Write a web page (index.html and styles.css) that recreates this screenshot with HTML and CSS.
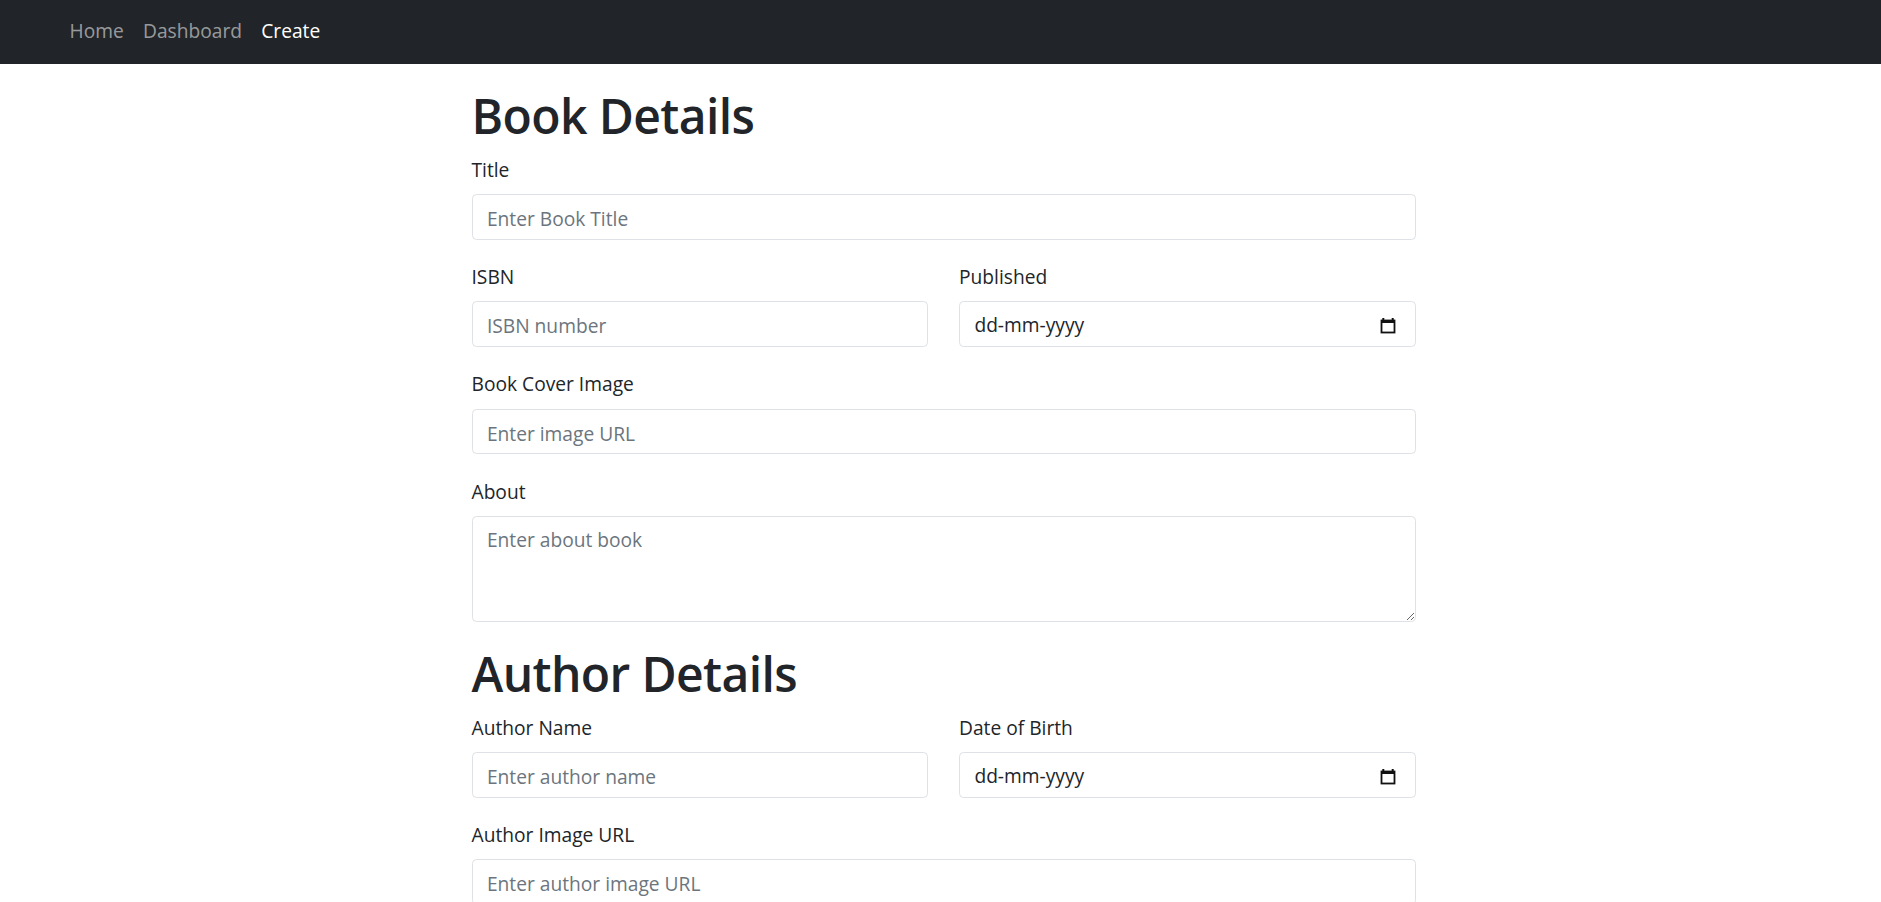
FILE: index.html
```html
<!DOCTYPE html>
<html lang="en">
<head>
<meta charset="utf-8">
<title>Create Book</title>
<link rel="stylesheet" href="styles.css">
</head>
<body>
<nav class="navbar">
  <a class="nav-link" href="#">Home</a>
  <a class="nav-link" href="#">Dashboard</a>
  <a class="nav-link active" href="#">Create</a>
</nav>
<div class="page">
  <form class="form">
    <section class="section">
      <h1 class="heading">Book Details</h1>
      <div class="field">
        <label class="label" for="title">Title</label>
        <input class="control" id="title" type="text" placeholder="Enter Book Title">
      </div>
      <div class="row">
        <div class="col">
          <label class="label" for="isbn">ISBN</label>
          <input class="control" id="isbn" type="text" placeholder="ISBN number">
        </div>
        <div class="col">
          <label class="label">Published</label>
          <div class="control date">
            <span class="date-text">dd-mm-yyyy</span>
            <svg class="cal" width="16" height="17" viewBox="0 0 16 17"><rect x="1.5" y="3.5" width="13" height="12" fill="none" stroke="#111" stroke-width="1.8"/><rect x="1.5" y="3" width="13" height="3" fill="#111"/><rect x="2.3" y="1" width="2" height="3" fill="#111"/><rect x="11.7" y="1" width="2" height="3" fill="#111"/></svg>
          </div>
        </div>
      </div>
      <div class="field">
        <label class="label" for="cover">Book Cover Image</label>
        <input class="control" id="cover" type="text" placeholder="Enter image URL">
      </div>
      <div class="field">
        <label class="label" for="about">About</label>
        <textarea class="control area" id="about" placeholder="Enter about book"></textarea>
      </div>
    </section>
    <section class="section second">
      <h1 class="heading">Author Details</h1>
      <div class="row">
        <div class="col">
          <label class="label" for="aname">Author Name</label>
          <input class="control" id="aname" type="text" placeholder="Enter author name">
        </div>
        <div class="col">
          <label class="label">Date of Birth</label>
          <div class="control date">
            <span class="date-text">dd-mm-yyyy</span>
            <svg class="cal" width="16" height="17" viewBox="0 0 16 17"><rect x="1.5" y="3.5" width="13" height="12" fill="none" stroke="#111" stroke-width="1.8"/><rect x="1.5" y="3" width="13" height="3" fill="#111"/><rect x="2.3" y="1" width="2" height="3" fill="#111"/><rect x="11.7" y="1" width="2" height="3" fill="#111"/></svg>
          </div>
        </div>
      </div>
      <div class="field">
        <label class="label" for="aimg">Author Image URL</label>
        <input class="control" id="aimg" type="text" placeholder="Enter author image URL">
      </div>
    </section>
  </form>
</div>
</body>
</html>
```
FILE: styles.css
```css
* { box-sizing: border-box; }
html, body { margin: 0; padding: 0; }
body {
  font-family: "Open Sans", "Noto Sans", sans-serif;
  font-size: 19.2px;
  line-height: 1.5;
  color: #212529;
  background: #fff;
  overflow: hidden;
}
.navbar {
  height: 64px;
  background: #212529;
  display: flex;
  align-items: center;
  padding-left: 60px;
  padding-bottom: 2px;
}
.nav-link {
  color: rgba(255,255,255,0.55);
  text-decoration: none;
  padding: 0 9.6px;
  line-height: 28.8px;
}
.nav-link.active { color: #fff; }
.page { padding-left: 6px; }
.form {
  width: 944px;
  margin: 0 auto;
  padding-top: 23px;
}
.heading {
  font-size: 48px;
  font-weight: 600;
  line-height: 57.6px;
  margin: 0 0 11px;
  letter-spacing: -0.6px;
}
.section.second { margin-top: 22.5px; }
.section.second .heading { margin-bottom: 11.5px; }
.field, .row { margin-top: 23.4px; }
.heading + .field, .heading + .row { margin-top: 0; }
.row { display: flex; gap: 31px; }
.col { flex: 1 1 0; min-width: 0; }
.label {
  display: block;
  line-height: 28.8px;
  margin-bottom: 9.6px;
}
.control {
  display: block;
  width: 100%;
  height: 45.6px;
  padding: 9px 14.4px 6px;
  font-family: inherit;
  font-size: 19.2px;
  line-height: 28.6px;
  color: #212529;
  background: #fff;
  border: 1px solid #dee2e6;
  border-radius: 4.5px;
  outline: none;
}
.control::placeholder { color: #6c757d; opacity: 1; }
.area { height: 106px; resize: vertical; }
.date {
  display: flex;
  align-items: center;
  justify-content: space-between;
  padding-right: 19px;
}
.cal { display: block; }
```
